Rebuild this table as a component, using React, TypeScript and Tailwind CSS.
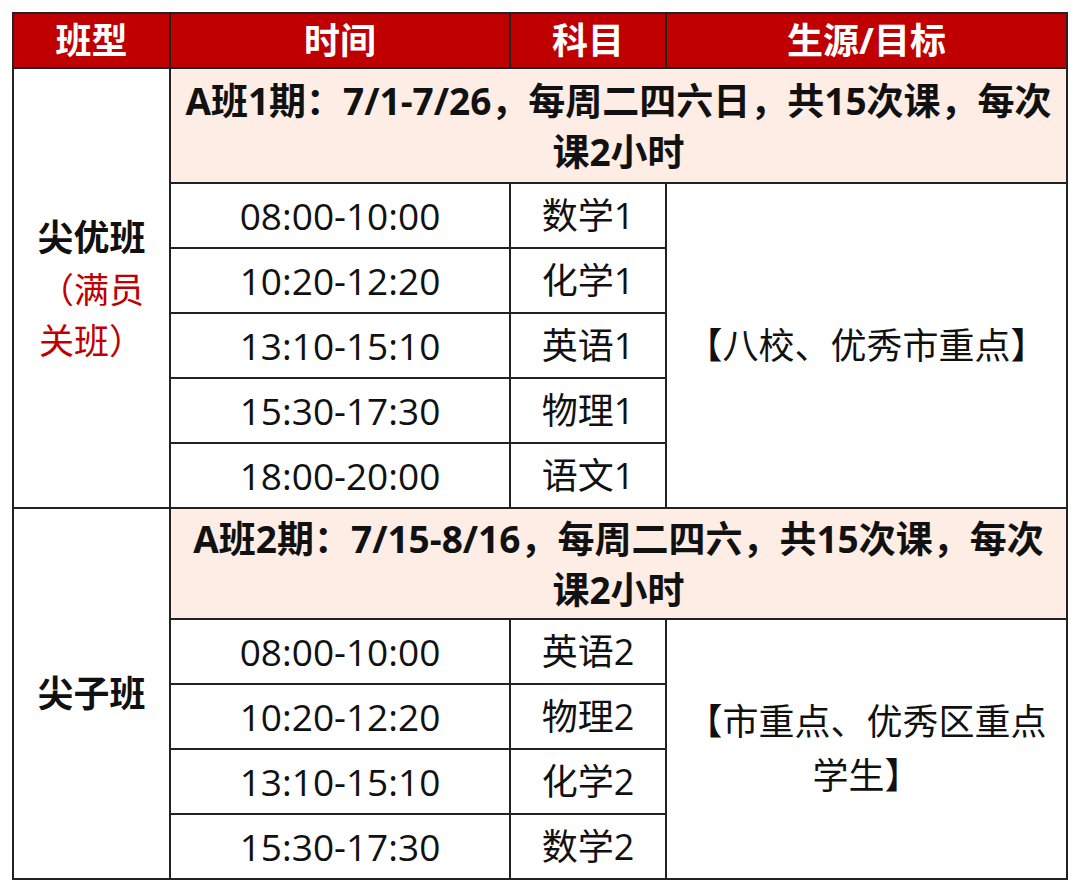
const font = { fontFamily: '"Open Sans", "Noto Sans CJK SC", sans-serif' };

const cell = "border-2 border-[#222] text-center align-middle";

type Row = { time: string; subject: string };

const group1: Row[] = [
  { time: "08:00-10:00", subject: "数学1" },
  { time: "10:20-12:20", subject: "化学1" },
  { time: "13:10-15:10", subject: "英语1" },
  { time: "15:30-17:30", subject: "物理1" },
  { time: "18:00-20:00", subject: "语文1" },
];

const group2: Row[] = [
  { time: "08:00-10:00", subject: "英语2" },
  { time: "10:20-12:20", subject: "物理2" },
  { time: "13:10-15:10", subject: "化学2" },
  { time: "15:30-17:30", subject: "数学2" },
];

function TimeCell({ text }: { text: string }) {
  return <td className={`${cell} text-[37px] text-[#111]`}>{text}</td>;
}

function SubjectCell({ text }: { text: string }) {
  return <td className={`${cell} text-[36px] text-[#111]`}>{text}</td>;
}

export default function App() {
  return (
    <div className="min-h-screen bg-white pt-[12px] pl-[12px]" style={font}>
      <table className="w-[1056px] table-fixed border-collapse">
        <colgroup>
          <col className="w-[157px]" />
          <col className="w-[340px]" />
          <col className="w-[156px]" />
          <col className="w-[401px]" />
        </colgroup>
        <tbody>
          <tr className="h-[55px] bg-[#c00000] text-[36px] font-bold leading-none text-white">
            <td className={cell}>班型</td>
            <td className={cell}>时间</td>
            <td className={cell}>科目</td>
            <td className={cell}>生源/目标</td>
          </tr>

          <tr className="h-[115px]">
            <td rowSpan={6} className={`${cell} bg-white`}>
              <div className="pt-[2px] text-[36px] font-bold leading-[52px] text-[#111]">尖优班</div>
              <div className="text-[35px] leading-[51px] text-[#c00000]">（满员</div>
              <div className="text-[35px] leading-[51px] text-[#c00000]">关班）</div>
            </td>
            <td colSpan={3} className={`${cell} bg-[#fdede5] text-[37px] font-bold leading-[51px] text-[#111]`}>
              A班1期：7/1-7/26，每周二四六日，共15次课，每次
              <br />
              课2小时
            </td>
          </tr>
          {group1.map((r, i) => (
            <tr key={r.time} className="h-[65px]">
              <TimeCell text={r.time} />
              <SubjectCell text={r.subject} />
              {i === 0 && (
                <td rowSpan={5} className={`${cell} text-[36px] text-[#111]`}>
                  【八校、优秀市重点】
                </td>
              )}
            </tr>
          ))}

          <tr className="h-[111px]">
            <td rowSpan={5} className={`${cell} text-[36px] font-bold text-[#111]`}>
              尖子班
            </td>
            <td colSpan={3} className={`${cell} bg-[#fdede5] text-[37px] font-bold leading-[51px] text-[#111]`}>
              A班2期：7/15-8/16，每周二四六，共15次课，每次
              <br />
              课2小时
            </td>
          </tr>
          {group2.map((r, i) => (
            <tr key={r.time} className="h-[65px]">
              <TimeCell text={r.time} />
              <SubjectCell text={r.subject} />
              {i === 0 && (
                <td rowSpan={4} className={`${cell} text-[36px] leading-[54px] text-[#111]`}>
                  【市重点、优秀区重点
                  <br />
                  学生】
                </td>
              )}
            </tr>
          ))}
        </tbody>
      </table>
    </div>
  );
}
